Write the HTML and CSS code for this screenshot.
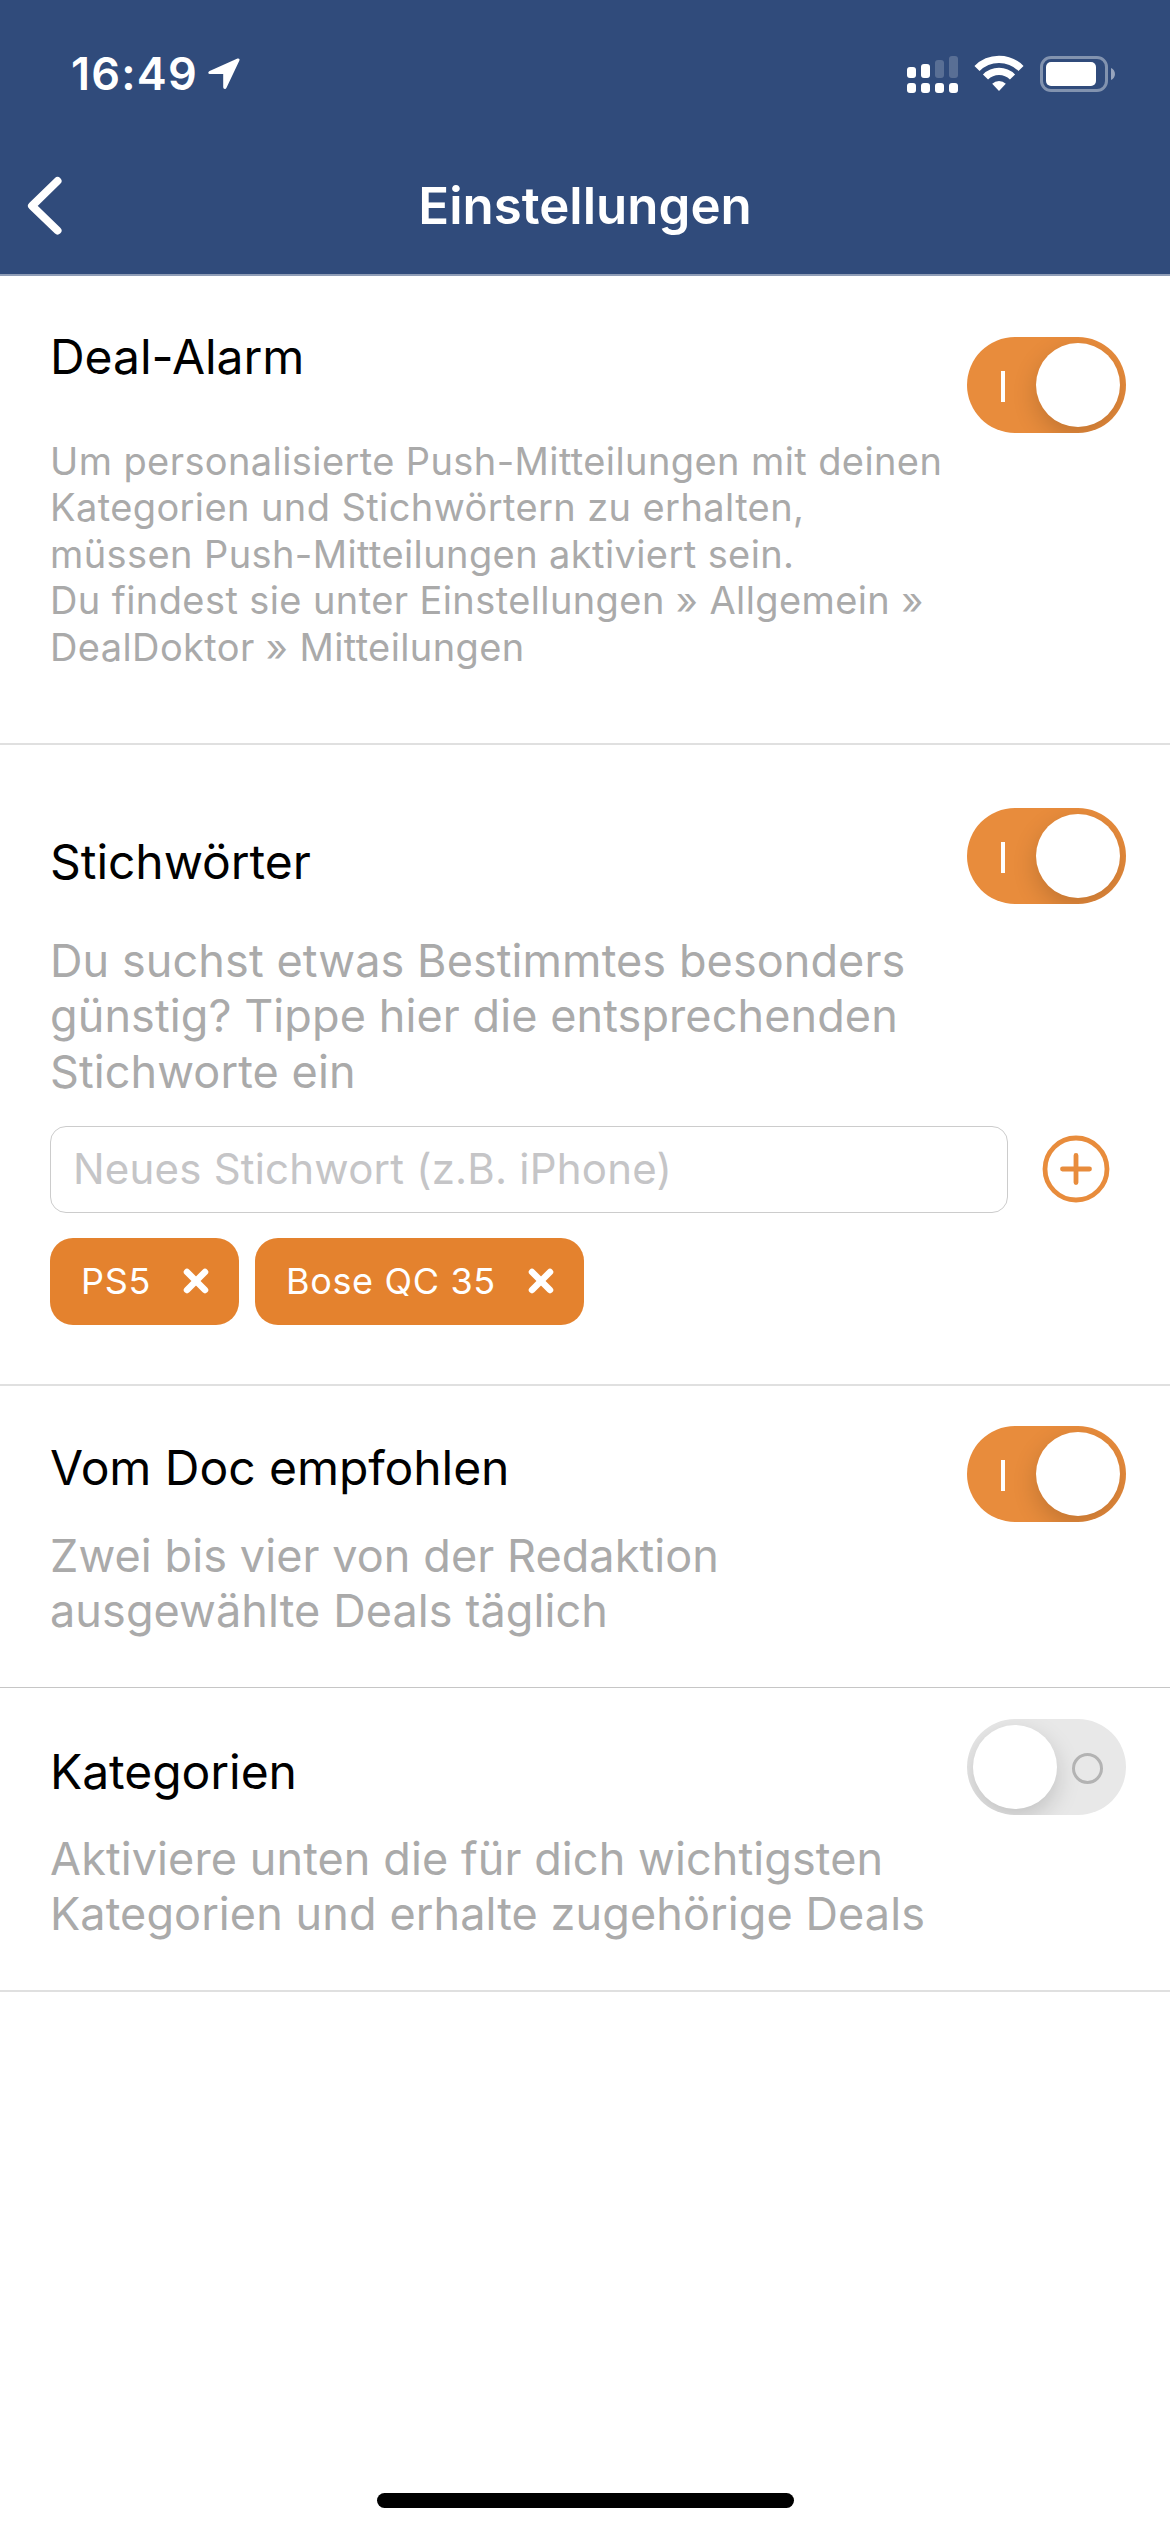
FILE: index.html
```html
<!DOCTYPE html>
<html lang="de">
<head>
<meta charset="utf-8">
<title>Einstellungen</title>
<link rel="stylesheet" href="styles.css">
</head>
<body>
<header class="header">
  <div class="status">
    <span class="time">16:49</span>
    <svg class="locate" width="34" height="34" viewBox="0 0 34 34"><path d="M30.500 1.600 2.600 13.900c-2 1-1.500 3.200.6 3.200h13v13c0 2.300 2.400 2.700 3.300.7L32.400 3.500c.6-1.500-.5-2.500-1.900-1.900z" fill="#fff"/></svg>
    <svg class="signal" width="52" height="38" viewBox="0 0 52 38" fill="#fff"><rect x="0" y="11" width="9" height="11" rx="3"/><rect x="14" y="8" width="9" height="14" rx="3"/><rect x="28" y="4" width="9" height="18" rx="3" opacity=".2"/><rect x="42" y="0" width="9" height="22" rx="3" opacity=".2"/><rect x="0" y="27" width="9" height="10" rx="3"/><rect x="14" y="27" width="9" height="10" rx="3"/><rect x="28" y="27" width="9" height="10" rx="3"/><rect x="42" y="27" width="9" height="10" rx="3"/></svg>
    <svg class="wifi" width="50" height="38" viewBox="0 0 50 38"><g fill="none" stroke="#fff" stroke-width="7.200"><path d="M3 13.500a31 31 0 0 1 44 0"/><path d="M11.500 22a19 19 0 0 1 27 0"/></g><path d="M18.200 28.800a9.800 9.800 0 0 1 13.600 0L25 36z" fill="#fff"/></svg>
    <svg class="battery" width="76" height="38" viewBox="0 0 76 38"><rect x="1.500" y="1.500" width="65" height="33" rx="9.500" fill="none" stroke="#fff" stroke-opacity=".4" stroke-width="3"/><rect x="6" y="6" width="50" height="24" rx="5" fill="#fff"/><path d="M71 12c5.300 2 5.300 10 0 12z" fill="#fff" fill-opacity=".5"/></svg>
  </div>
  <nav class="navbar">
    <svg class="back" width="36" height="60" viewBox="0 0 36 60"><path d="M30.500 5 5 29.800 30.500 54.500" fill="none" stroke="#fff" stroke-width="8" stroke-linecap="round" stroke-linejoin="round"/></svg>
    <h1 class="page-title">Einstellungen</h1>
  </nav>
</header>
<main>
  <section class="setting alarm">
    <div class="copy">
      <h2 class="title">Deal-Alarm</h2>
      <p class="desc small">Um personalisierte Push-Mitteilungen mit deinen<br>Kategorien und Stichwörtern zu erhalten,<br>müssen Push-Mitteilungen aktiviert sein.<br>Du findest sie unter Einstellungen » Allgemein »<br>DealDoktor » Mitteilungen</p>
    </div>
    <div class="toggle on"><span class="mark"></span><span class="knob"></span></div>
  </section>
  <section class="setting keywords">
    <div class="copy">
      <h2 class="title">Stichwörter</h2>
      <p class="desc">Du suchst etwas Bestimmtes besonders<br>günstig? Tippe hier die entsprechenden<br>Stichworte ein</p>
    </div>
    <div class="toggle on"><span class="mark"></span><span class="knob"></span></div>
    <div class="entry">
      <div class="field"><span class="placeholder">Neues Stichwort (z.B. iPhone)</span></div>
      <svg class="add" width="68" height="68" viewBox="0 0 68 68"><g fill="none" stroke="#e88c3c" stroke-width="4.800" stroke-linecap="round"><circle cx="34" cy="34" r="31"/><path d="M34 20.500v27M20.500 34h27"/></g></svg>
    </div>
    <div class="chips">
      <div class="chip"><span class="chip-text">PS5</span><svg width="26" height="26" viewBox="0 0 26 26"><path d="M4 4l18 18M22 4 4 22" stroke="#fff" stroke-width="6.500" stroke-linecap="round"/></svg></div>
      <div class="chip"><span class="chip-text">Bose QC 35</span><svg width="26" height="26" viewBox="0 0 26 26"><path d="M4 4l18 18M22 4 4 22" stroke="#fff" stroke-width="6.500" stroke-linecap="round"/></svg></div>
    </div>
  </section>
  <section class="setting doctor">
    <div class="copy">
      <h2 class="title">Vom Doc empfohlen</h2>
      <p class="desc">Zwei bis vier von der Redaktion<br>ausgewählte Deals täglich</p>
    </div>
    <div class="toggle on"><span class="mark"></span><span class="knob"></span></div>
  </section>
  <section class="setting categories">
    <div class="copy">
      <h2 class="title">Kategorien</h2>
      <p class="desc">Aktiviere unten die für dich wichtigsten<br>Kategorien und erhalte zugehörige Deals</p>
    </div>
    <div class="toggle"><span class="knob"></span><span class="mark"></span></div>
  </section>
</main>
<footer class="home"></footer>
</body>
</html>
```
FILE: styles.css
```css
* { box-sizing: border-box; }

body {
  margin: 0;
  width: 1170px;
  height: 2532px;
  display: flex;
  flex-direction: column;
  background: #fff;
  font-family: Inter, "Liberation Sans", sans-serif;
  white-space: nowrap;
}

h1, h2, p { margin: 0; }
svg { display: block; flex: none; }

.header {
  height: 276px;
  background: #304b7b;
  border-bottom: 2px solid #8f9db7;
  color: #fff;
}

.status { display: flex; align-items: flex-start; height: 140px; padding: 56px 54px 0 71px; }
.time { width: 136px; font-size: 45px; line-height: 36px; font-weight: 600; letter-spacing: 1.2px; }
.locate { margin-top: 1px; }
.signal { margin-left: auto; }
.wifi { margin: -1px 16px 0 15px; }

.navbar { display: grid; grid-template-columns: 36px 1fr 36px; align-items: center; height: 132px; padding: 0 27px; }
.page-title { text-align: center; font-size: 51px; line-height: 60px; font-weight: 600; }

.setting {
  display: grid;
  grid-template-columns: 1fr 159px;
  align-content: start;
  padding: 0 44px 0 50px;
  border-bottom: 2px solid #e0e0e0;
}
.alarm { height: 469px; }
.keywords { height: 641px; }
.doctor { height: 302px; border-bottom: 1px solid #c6c6c6; }
.categories { height: 304px; }

.title { font-size: 48px; line-height: 60px; font-weight: 400; letter-spacing: -.05px; color: #000; }
.desc { font-size: 45px; line-height: 55.3px; letter-spacing: .09px; color: #aaa; }
.small { font-size: 38px; line-height: 46.5px; letter-spacing: .4px; }

.alarm .title { margin: 51px 0 50.6px; }
.keywords .title { margin: 87px 0 41px; }
.doctor .title { margin: 51.5px 0 30px; }
.categories .title { margin: 53.5px 0 29px; }

.toggle {
  display: flex;
  align-items: center;
  width: 159px;
  height: 96px;
  padding: 0 6px;
  overflow: hidden;
  border-radius: 48px;
  background: #e8e8e8;
}
.toggle.on { background: #e88c3c; justify-content: flex-end; }
.alarm .toggle { margin-top: 61px; }
.keywords .toggle { margin-top: 63px; }
.doctor .toggle { margin-top: 40px; }
.categories .toggle { margin-top: 31px; }

.knob { width: 84px; height: 84px; border-radius: 50%; background: #fff; box-shadow: 0 9px 24px rgba(0, 0, 0, .17); }
.mark { width: 31px; height: 31px; margin: 3px 0 0 15px; border: 3px solid #b3b3b3; border-radius: 50%; }
.on .mark { width: 4px; height: 31px; margin: 3px 31px 0 0; border: 0; border-radius: 0; background: #fff; }

.entry { grid-column: 1 / -1; display: flex; align-items: center; gap: 34px; margin-top: 27px; }
.field { display: flex; align-items: center; width: 958px; height: 87px; padding-left: 22px; border: 1px solid #ccc; border-radius: 16px; }
.placeholder { font-size: 42px; line-height: 52px; letter-spacing: .2px; color: #c5c5c7; }

.chips { grid-column: 1 / -1; display: flex; gap: 16px; margin-top: 25px; }
.chip {
  display: flex;
  align-items: center;
  justify-content: space-between;
  width: 189px;
  height: 87px;
  padding: 0 30px 0 31px;
  border-radius: 23px;
  background: #e4822e;
  color: #fff;
  font-size: 36px;
  letter-spacing: .65px;
}
.chip + .chip { width: 329px; }

.home { width: 417px; height: 15px; margin: auto auto 24px; border-radius: 8px; background: #000; }
```
